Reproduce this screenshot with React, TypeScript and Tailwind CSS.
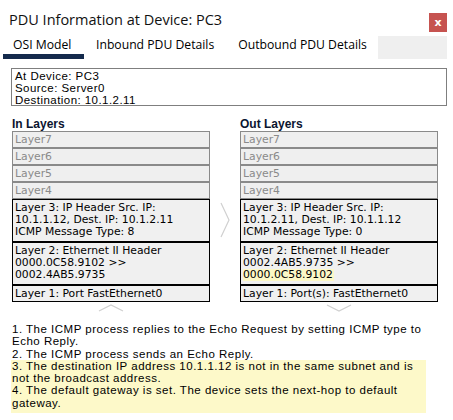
import React from 'react';

const grayLayers = ['Layer7', 'Layer6', 'Layer5', 'Layer4'];

function Column({
  title,
  l3,
  l2,
  l2hl,
  l1,
}: {
  title: string;
  l3: string[];
  l2: string[];
  l2hl?: string;
  l1: string;
}) {
  return (
    <div className="flex flex-col w-[198px]">
      <div className="font-['Liberation_Sans',Arial,sans-serif] font-bold text-[12px] leading-[13px] text-[#0b1530] h-[13px]">
        {title}
      </div>
      <div className="flex flex-col font-['DejaVu_Sans',Verdana,sans-serif] text-[10.8px]">
        {grayLayers.map((l) => (
          <div
            key={l}
            className="h-[17px] border border-[#8a8a8a] bg-[#efefef] text-[#8a8a8a] pl-[2px] leading-[15px]"
          >
            {l}
          </div>
        ))}
        <div className="h-[43px] border border-black bg-[#f0f0f0] text-black pl-[2px] pt-[2px] leading-[12px]">
          {l3.map((t) => (
            <div key={t}>{t}</div>
          ))}
        </div>
        <div className="h-[43px] border border-black bg-[#f0f0f0] text-black pl-[2px] pt-[2px] leading-[12px]">
          {l2.map((t) => (
            <div key={t}>{t}</div>
          ))}
          {l2hl && <div className="bg-[#fcf8c6] w-fit pr-[1px]">{l2hl}</div>}
        </div>
        <div className="h-[17px] border border-black bg-[#f0f0f0] text-black pl-[2px] leading-[15px]">
          {l1}
        </div>
      </div>
    </div>
  );
}

export default function App() {
  return (
    <div className="w-[453px] h-[420px] bg-white overflow-hidden flex flex-col">
      {/* header */}
      <div className="flex items-start justify-between h-[36px] pl-[9px] pr-[6px]">
        <div className="font-['Open_Sans',sans-serif] text-[14.5px] leading-[20px] mt-[10px] text-[#111]">
          PDU Information at Device: PC3
        </div>
        <button className="mt-[13px] w-[18px] h-[19px] bg-[#c65350] text-white text-[11px] font-bold leading-[19px] flex items-center justify-center font-['DejaVu_Sans',sans-serif]">
          x
        </button>
      </div>
      {/* tabs */}
      <div className="flex h-[23px] pr-[6px] font-['Open_Sans',sans-serif] text-[12.2px] text-black">
        <div className="relative w-[81px] ml-[3px] pl-[10px] leading-[18px]">
          OSI Model
          <div className="absolute left-0 bottom-0 w-[81px] h-[5px] bg-[#142a4c]" />
        </div>
        <div className="ml-[12px] leading-[18px]">Inbound PDU Details</div>
        <div className="ml-[24px] leading-[18px]">Outbound PDU Details</div>
        <div className="flex-1 ml-[11px] bg-[#efefef]" />
      </div>
      {/* info box */}
      <div className="mt-[9px] ml-[11px] mr-[6px] h-[38px] border border-[#7f7f7f] pl-[3px] pt-[1px] font-['Liberation_Sans',Arial,sans-serif] text-[11.5px] leading-[12px] tracking-[0.45px] text-black">
        <div>At Device: PC3</div>
        <div>Source: Server0</div>
        <div>Destination: 10.1.2.11</div>
      </div>
      {/* layers */}
      <div className="flex mt-[12px] ml-[12px]">
        <Column
          title="In Layers"
          l3={['Layer 3: IP Header Src. IP:', '10.1.1.12, Dest. IP: 10.1.2.11', 'ICMP Message Type: 8']}
          l2={['Layer 2: Ethernet II Header', '0000.0C58.9102 >>', '0002.4AB5.9735']}
          l1="Layer 1: Port FastEthernet0"
        />
        <div className="w-[30px] flex flex-col pt-[84px] items-center">
          <svg width="10" height="36" viewBox="0 0 10 36">
            <path d="M1 1 L9 18 L1 35" fill="none" stroke="#d0d0d0" strokeWidth="1.2" />
          </svg>
        </div>
        <Column
          title="Out Layers"
          l3={['Layer 3: IP Header Src. IP:', '10.1.2.11, Dest. IP: 10.1.1.12', 'ICMP Message Type: 0']}
          l2={['Layer 2: Ethernet II Header', '0002.4AB5.9735 >>']}
          l2hl="0000.0C58.9102"
          l1="Layer 1: Port(s): FastEthernet0"
        />
      </div>
      {/* chevrons */}
      <div className="flex ml-[12px] h-[10px] mt-[2px]">
        <div className="w-[198px] flex justify-center">
          <svg width="26" height="8" viewBox="0 0 26 8">
            <path d="M1 7 L13 1 L25 7" fill="none" stroke="#d0d0d0" strokeWidth="1.2" />
          </svg>
        </div>
        <div className="w-[30px]" />
        <div className="w-[198px] flex justify-center">
          <svg width="26" height="8" viewBox="0 0 26 8">
            <path d="M1 1 L13 7 L25 1" fill="none" stroke="#d0d0d0" strokeWidth="1.2" />
          </svg>
        </div>
      </div>
      {/* steps */}
      <div className="mt-[9px] ml-[11px] mr-[17px] font-['Liberation_Sans',Arial,sans-serif] text-[11.5px] leading-[12.3px] tracking-[0.5px] text-black">
        <div className="pl-[1px]">
          1. The ICMP process replies to the Echo Request by setting ICMP type to Echo Reply.
        </div>
        <div className="pl-[1px]">2. The ICMP process sends an Echo Reply.</div>
        <div className="bg-[#fdf9c9] pl-[1px] pb-[4px] mr-[10px]">
          <div>3. The destination IP address 10.1.1.12 is not in the same subnet and is not the broadcast address.</div>
          <div>4. The default gateway is set. The device sets the next-hop to default gateway.</div>
        </div>
      </div>
    </div>
  );
}
